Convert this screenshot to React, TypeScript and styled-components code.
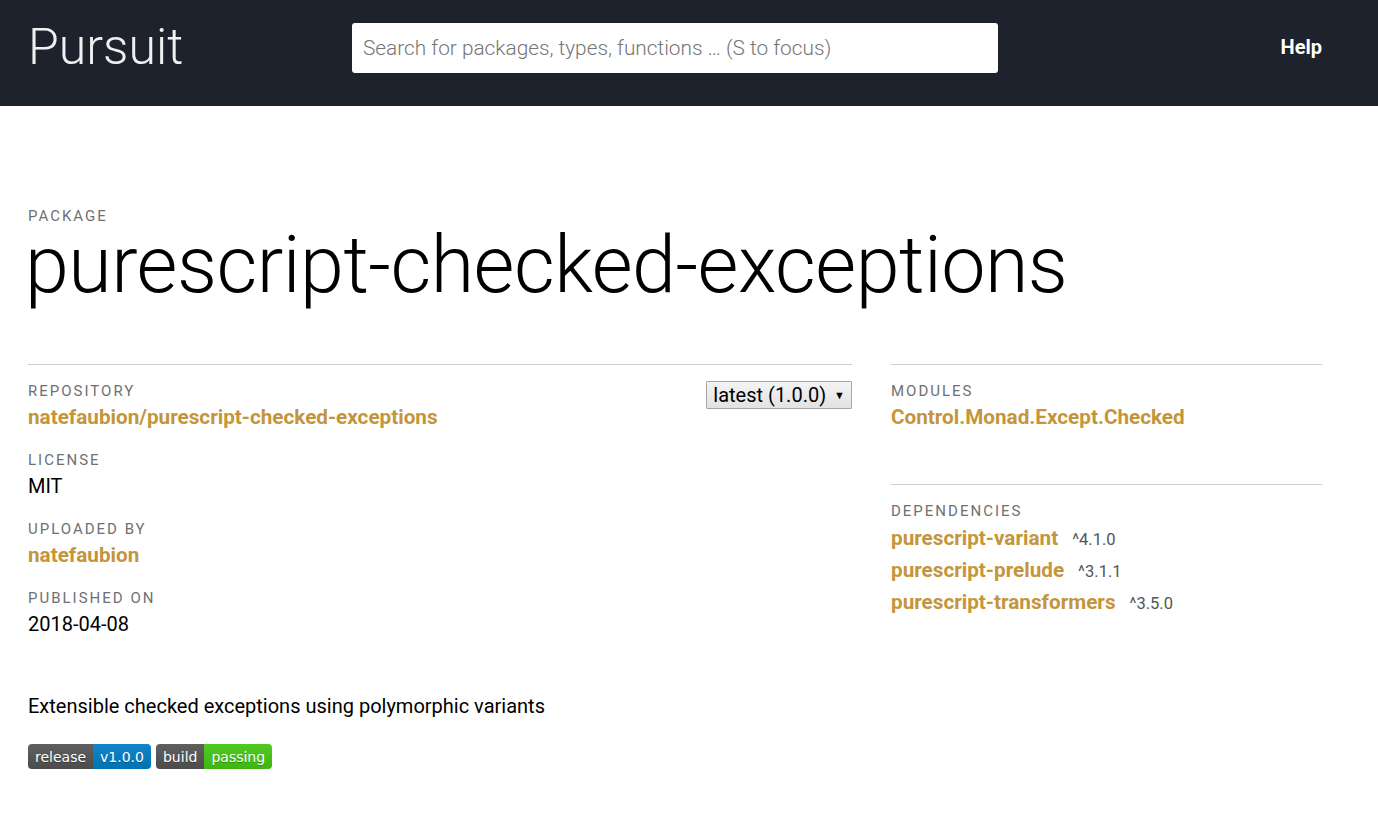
import React from "react";
import styled, { createGlobalStyle } from "styled-components";

const GlobalStyle = createGlobalStyle`
  body {
    margin: 0;
    font-family: Roboto, "Liberation Sans", sans-serif;
    color: #000;
    background: #fff;
  }
`;

const TopBar = styled.header`
  height: 106px;
  background: #1d222d;
  display: flex;
  align-items: center;
  padding: 0 56px 0 28px;
  box-sizing: border-box;
`;

const Logo = styled.a`
  font-size: 50px;
  font-weight: 300;
  color: #f0f0f0;
  text-decoration: none;
  width: 324px;
  margin-top: -12px;
`;

const Search = styled.input`
  width: 646px;
  height: 50px;
  box-sizing: border-box;
  border: 0;
  border-radius: 3px;
  padding: 0 11px;
  font-family: Roboto, sans-serif;
  font-size: 20.8px;
  font-weight: 300;
  margin-top: -10px;
  outline: none;
  &::placeholder {
    color: #757575;
  }
`;

const Help = styled.a`
  margin-left: auto;
  margin-top: -13px;
  color: #fff;
  font-weight: 700;
  font-size: 20px;
  text-decoration: none;
`;

const Main = styled.main`
  padding: 0 56px 0 28px;
`;

const TitleBlock = styled.section`
  padding-top: 101px;
  margin-bottom: 59px;
`;

const Label = styled.div`
  font-size: 15px;
  letter-spacing: 2px;
  text-transform: uppercase;
  color: #707070;
  line-height: 18px;
`;

const Title = styled.h1`
  margin: 0 0 0 -3px;
  font-size: 79px;
  font-weight: 300;
  line-height: 80px;
  letter-spacing: -0.5px;
`;

const Columns = styled.div`
  display: grid;
  grid-template-columns: 824fr 431fr;
  column-gap: 39px;
`;

const Panel = styled.div`
  border-top: 1px solid #cfcfcf;
  padding-top: 17px;
  position: relative;
`;

const Field = styled.div`
  margin-bottom: 20px;
`;

const Value = styled.div`
  font-size: 20px;
  line-height: 27px;
  margin-top: 4px;
`;

const Link = styled.a`
  color: #c4953a;
  font-weight: 700;
  font-size: 20.7px;
  text-decoration: none;
`;

const VersionSelect = styled.div`
  position: absolute;
  right: 0;
  top: 16px;
  height: 28px;
  box-sizing: border-box;
  display: flex;
  align-items: center;
  gap: 8px;
  padding: 0 6px;
  border: 1px solid #a6a6a6;
  background: linear-gradient(#f4f4f4, #e2e2e2);
  font-size: 20px;
  border-radius: 1px;
  span {
    font-size: 11px;
  }
`;

const RightBlock = styled.div`
  margin-bottom: 53px;
`;

const DepList = styled.div`
  padding-top: 2px;
`;

const Dep = styled.div`
  display: flex;
  align-items: baseline;
  gap: 14px;
  height: 32px;
  line-height: 32px;
`;

const DepVersion = styled.span`
  font-size: 16.5px;
  color: #555;
`;

const Description = styled.p`
  font-size: 20px;
  margin: 35px 0 24px;
  line-height: 27px;
`;

const Badges = styled.div`
  display: flex;
  gap: 5px;
`;

const Badge = styled.span`
  display: inline-flex;
  height: 25px;
  border-radius: 4px;
  overflow: hidden;
  font-family: "DejaVu Sans", Verdana, sans-serif;
  font-size: 14px;
  color: #fff;
  text-shadow: 0 1px 0 rgba(1, 1, 1, 0.3);
`;

const BadgePart = styled.span<{ $bg: string }>`
  display: flex;
  align-items: center;
  padding: 0 7px;
  background-image: linear-gradient(rgba(187, 187, 187, 0.1), rgba(0, 0, 0, 0.1));
  background-color: ${({ $bg }) => $bg};
`;

const deps = [
  ["purescript-variant", "^4.1.0"],
  ["purescript-prelude", "^3.1.1"],
  ["purescript-transformers", "^3.5.0"],
];

export default function App() {
  return (
    <>
      <GlobalStyle />
      <TopBar>
        <Logo href="#">Pursuit</Logo>
        <Search placeholder="Search for packages, types, functions … (S to focus)" />
        <Help href="#">Help</Help>
      </TopBar>
      <Main>
        <TitleBlock>
          <Label>Package</Label>
          <Title>purescript-checked-exceptions</Title>
        </TitleBlock>
        <Columns>
          <Panel>
            <VersionSelect>
              latest (1.0.0) <span>▼</span>
            </VersionSelect>
            <Field>
              <Label>Repository</Label>
              <Value>
                <Link href="#">natefaubion/purescript-checked-exceptions</Link>
              </Value>
            </Field>
            <Field>
              <Label>License</Label>
              <Value>MIT</Value>
            </Field>
            <Field>
              <Label>Uploaded by</Label>
              <Value>
                <Link href="#">natefaubion</Link>
              </Value>
            </Field>
            <Field>
              <Label>Published on</Label>
              <Value>2018-04-08</Value>
            </Field>
          </Panel>
          <div>
            <Panel>
              <RightBlock>
                <Label>Modules</Label>
                <Value>
                  <Link href="#">Control.Monad.Except.Checked</Link>
                </Value>
              </RightBlock>
            </Panel>
            <Panel>
              <Label>Dependencies</Label>
              <DepList>
                {deps.map(([name, v]) => (
                  <Dep key={name}>
                    <Link href="#">{name}</Link>
                    <DepVersion>{v}</DepVersion>
                  </Dep>
                ))}
              </DepList>
            </Panel>
          </div>
        </Columns>
        <Description>Extensible checked exceptions using polymorphic variants</Description>
        <Badges>
          <Badge>
            <BadgePart $bg="#555">release</BadgePart>
            <BadgePart $bg="#007ec6">v1.0.0</BadgePart>
          </Badge>
          <Badge>
            <BadgePart $bg="#555">build</BadgePart>
            <BadgePart $bg="#4c1">passing</BadgePart>
          </Badge>
        </Badges>
      </Main>
    </>
  );
}
